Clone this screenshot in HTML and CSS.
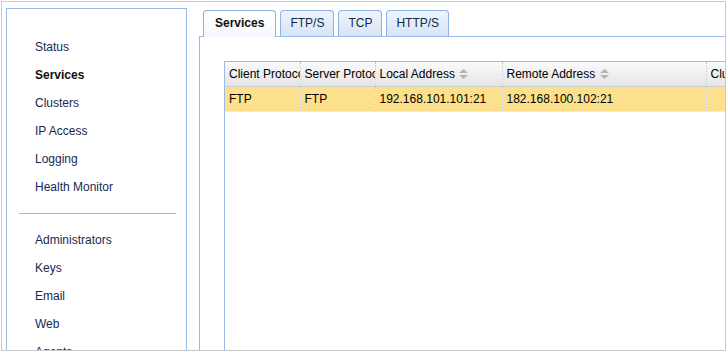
FILE: index.html
```html
<!DOCTYPE html>
<html lang="en">
<head>
    <meta charset="UTF-8">
    <title>Services</title>
    <link rel="stylesheet" href="styles.css">
</head>
<body>
    <div class="frame">
        <nav class="sidebar">
            <ul class="menu first">
                <li>Status</li>
                <li class="active">Services</li>
                <li>Clusters</li>
                <li>IP Access</li>
                <li>Logging</li>
                <li>Health Monitor</li>
            </ul>
            <div class="divider"></div>
            <ul class="menu">
                <li>Administrators</li>
                <li>Keys</li>
                <li>Email</li>
                <li>Web</li>
                <li>Agents</li>
            </ul>
        </nav>

        <div class="main">
            <div class="tabs">
                <div class="tab active">Services</div>
                <div class="tab">FTP/S</div>
                <div class="tab">TCP</div>
                <div class="tab">HTTP/S</div>
            </div>
            <div class="tab-body">
                <div class="grid">
                    <table>
                        <colgroup>
                            <col style="width: 75px">
                            <col style="width: 75px">
                            <col style="width: 127px">
                            <col style="width: 204px">
                            <col style="width: 120px">
                        </colgroup>
                        <thead>
                            <tr>
                                <th>Client Protocol</th>
                                <th>Server Protocol</th>
                                <th>Local Address <svg class="sort" width="9" height="10" viewBox="0 0 9 10"><path d="M4.5 0 L9 4 L0 4 Z M0 6 L9 6 L4.5 10 Z"/></svg></th>
                                <th>Remote Address <svg class="sort" width="9" height="10" viewBox="0 0 9 10"><path d="M4.5 0 L9 4 L0 4 Z M0 6 L9 6 L4.5 10 Z"/></svg></th>
                                <th>Cluster</th>
                            </tr>
                        </thead>
                        <tbody>
                            <tr class="selected">
                                <td>FTP</td>
                                <td>FTP</td>
                                <td>192.168.101.101:21</td>
                                <td>182.168.100.102:21</td>
                                <td></td>
                            </tr>
                        </tbody>
                    </table>
                </div>
            </div>
        </div>
    </div>
</body>
</html>
```

FILE: styles.css
```css
body {
    margin: 0;
    padding: 1px;
    font-family: 'Liberation Sans', Arial, sans-serif;
    font-size: 12px;
    background-color: #fff;
}
.frame {
    width: 725px;
    height: 350px;
    box-sizing: border-box;
    border: 1px solid #c9c9c9;
    overflow: hidden;
    display: flex;
    align-items: flex-start;
}
.sidebar {
    flex: none;
    width: 181px;
    height: 420px;
    box-sizing: border-box;
    margin: 6px 0 0 4px;
    padding-top: 24px;
    border: 1px solid #99bbe8;
}
.menu {
    list-style: none;
    margin: 0;
    padding: 0 0 0 28px;
}
.menu li {
    line-height: 28px;
    color: #16294f;
    cursor: pointer;
}
.menu li.active {
    font-weight: bold;
    color: #111;
}
.divider {
    width: 157px;
    height: 1px;
    margin: 12px 0 12px 12px;
    background-color: #99bbe8;
}
.main {
    flex: 1;
    min-width: 0;
    margin: 8px 0 0 12px;
}
.tabs {
    display: flex;
    height: 26px;
    padding-left: 4px;
    position: relative;
    z-index: 1;
}
.tab {
    height: 25px;
    line-height: 25px;
    padding: 0 9px;
    margin-right: 4px;
    border: 1px solid #8db2e3;
    border-bottom: none;
    border-radius: 4px 4px 0 0;
    background: linear-gradient(#eef4fc, #d7e5f7);
    color: #15284c;
    cursor: pointer;
}
.tab.active {
    height: 26px;
    padding: 0 11px;
    font-weight: bold;
    color: #111;
    background: linear-gradient(#ffffff, #f4f8fd);
}
.tab-body {
    height: 400px;
    padding: 24px 0 0 24px;
    border: 1px solid #99bbe8;
    border-right: none;
}
.grid {
    height: 400px;
    border-left: 1px solid #99bbe8;
    border-top: 1px solid #99bbe8;
    overflow: hidden;
}
.grid table {
    table-layout: fixed;
    border-collapse: collapse;
    width: 601px;
}
.grid th, .grid td {
    height: 24px;
    padding: 0 4px;
    text-align: left;
    white-space: nowrap;
    overflow: hidden;
    border-right: 1px dotted #c4c4c4;
    color: #000;
    font-size: 12px;
}
.grid th {
    font-weight: normal;
    background: linear-gradient(#fafafa, #e5e5e5);
    border-bottom: 1px solid #d0d0d0;
}
.grid td {
    border-bottom: 1px solid #ececec;
}
.grid tr.selected td {
    background-color: #fde08b;
}
.sort {
    fill: #b4b4b4;
    vertical-align: -1px;
    margin-left: 1px;
}
```
